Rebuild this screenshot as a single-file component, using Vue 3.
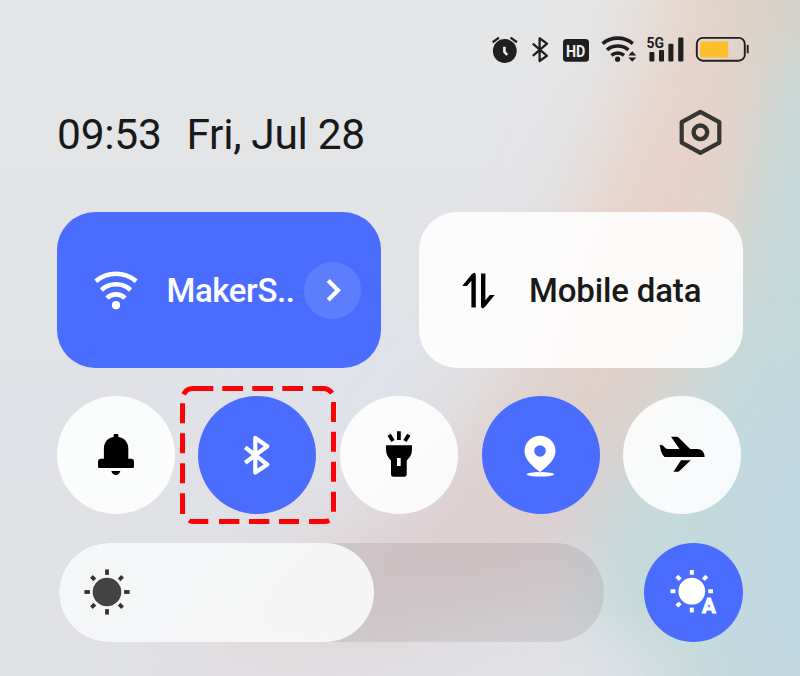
<script setup>
const rays = [0, 45, 90, 135, 180, 225, 270, 315]
const autoRays = rays.filter((a) => a !== 135)
const brightness = 57.8
</script>

<template>
  <main class="panel">
    <svg class="wallpaper" viewBox="0 0 800 676" aria-hidden="true">
      <defs>
        <linearGradient id="base" x1="0" y1="0" x2="0" y2="1">
          <stop offset="0" stop-color="#e5e6e7" />
          <stop offset="0.6" stop-color="#e0e2e7" />
          <stop offset="1" stop-color="#e0e1e5" />
        </linearGradient>
        <linearGradient id="blush" gradientUnits="userSpaceOnUse" x1="0" y1="0" x2="0" y2="676">
          <stop offset="0" stop-color="#e5d4c9" />
          <stop offset="0.3" stop-color="#e9d1c7" />
          <stop offset="0.55" stop-color="#e0d2cb" />
          <stop offset="0.8" stop-color="#ddced1" />
          <stop offset="1" stop-color="#e3dcdf" />
        </linearGradient>
        <filter id="soft" x="-50%" y="-50%" width="200%" height="200%"><feGaussianBlur stdDeviation="32" /></filter>
        <filter id="softer" x="-50%" y="-50%" width="200%" height="200%"><feGaussianBlur stdDeviation="42" /></filter>
      </defs>
      <rect width="800" height="676" fill="url(#base)" />
      <path d="M670-80L900-80L860 300L640 560L420 640L180 700L230 590L400 500L490 390L580 230L645 60Z" fill="url(#blush)" filter="url(#softer)" />
      <path d="M690 20L735 20L690 190L620 290L570 290L630 180Z" fill="#e9d1c7" opacity="0.5" filter="url(#soft)" />
      <ellipse cx="350" cy="370" rx="70" ry="60" fill="#dfe3ec" opacity="0.7" filter="url(#soft)" />
      <path d="M800-60L950-60L950 800L660 800L600 640L590 520L675 400L728 290L755 150Z" fill="#c4dadb" filter="url(#soft)" />
      <ellipse cx="820" cy="560" rx="90" ry="170" fill="#bfd8e4" filter="url(#softer)" />
      <ellipse cx="560" cy="675" rx="130" ry="30" fill="#e0e1e6" filter="url(#soft)" />
      <ellipse cx="780" cy="0" rx="50" ry="60" fill="#d9d0c5" opacity="0.8" filter="url(#soft)" />
    </svg>

    <div class="content">
      <header class="status">
        <svg class="alarm" width="28" height="30" viewBox="491 35 28 30">
          <circle cx="504.8" cy="51" r="11.9" fill="#1f1f1f" />
          <path d="M492.7 42.2L499 37.6M510.6 37.6L516.9 42.2" stroke="#1f1f1f" stroke-width="2.4" fill="none" />
          <path d="M504.4 46.8V51.8L507.2 55" stroke="#eee" stroke-width="2.6" fill="none" />
        </svg>
        <svg class="bt" width="18" height="30" viewBox="531 35 18 30">
          <path d="M532.8 43.6L547 55.8L539.6 61V38.3L547 43.6L532.8 55.8" fill="none" stroke="#1f1f1f" stroke-width="2.3" stroke-linejoin="round" />
        </svg>
        <svg class="hd" width="28" height="30" viewBox="562 35 28 30">
          <rect x="563" y="39" width="26" height="22.7" rx="3.5" fill="#1f1f1f" />
          <text transform="translate(566 56.6) scale(0.84 1)" class="hd-text">HD</text>
        </svg>
        <svg class="net" width="38" height="30" viewBox="600 35 38 30">
          <g fill="none" stroke="#1f1f1f" stroke-width="3.6">
            <path d="M602.6 43.6A23.5 23.5 0 0 1 632.8 43.6" />
            <path d="M607 49.8A17 17 0 0 1 628.4 49.8" />
            <path d="M611.4 55.3A10 10 0 0 1 624 55.3" />
          </g>
          <circle cx="617.6" cy="59.2" r="2.6" fill="#1f1f1f" />
          <path d="M632.3 51.3L636.3 55.4H628.3ZM628.3 57.6H636.3L632.3 61.7Z" fill="#1f1f1f" />
        </svg>
        <svg class="signal" width="40" height="36" viewBox="646 32 40 36">
          <g fill="#1f1f1f">
            <text transform="translate(646.6 48) scale(0.9 1)" class="g-text">5G</text>
            <rect x="649.4" y="52" width="5" height="9.4" rx="1" />
            <rect x="659" y="50" width="5" height="11.4" rx="1" />
            <rect x="668.4" y="43.8" width="5" height="17.6" rx="1" />
            <rect x="678.2" y="37.6" width="5.2" height="23.8" rx="1" />
          </g>
        </svg>
        <svg class="battery" width="54" height="30" viewBox="695 35 54 30">
          <rect x="696.8" y="37.9" width="48" height="22.8" rx="6" fill="none" stroke="#1f1f1f" stroke-width="1.9" />
          <rect x="700" y="41.5" width="28.2" height="15.9" rx="2.5" fill="#fbbf2b" />
          <path d="M747.7 45V53.3" stroke="#1f1f1f" stroke-width="1.9" />
        </svg>
      </header>

      <div class="heading">
        <span class="time">09:53</span>
        <span class="date">Fri, Jul 28</span>
        <svg class="settings" width="46" height="50" viewBox="677 107 46 50">
          <path d="M700.4 111.9L719.3 122.2V142.6L700.4 152.9L681.7 142.6V122.2Z" fill="none" stroke="#353533" stroke-width="4.2" stroke-linejoin="round" />
          <circle cx="700.4" cy="132.3" r="6.8" fill="none" stroke="#353533" stroke-width="4.4" />
        </svg>
      </div>

      <section class="cards">
        <div class="card active">
          <svg class="card-icon" width="52" height="48" viewBox="90 266 52 48">
            <g fill="none" stroke="#fff" stroke-width="4.6">
              <path d="M95.8 281.2A31 31 0 0 1 136.2 281.2" />
              <path d="M101.4 290A21.5 21.5 0 0 1 130.6 290" />
              <path d="M107 298.2A12.6 12.6 0 0 1 125 298.2" />
            </g>
            <circle cx="116" cy="305.2" r="4.1" fill="#fff" />
          </svg>
          <span class="label wifi-name">MakerS..</span>
          <button class="more" aria-label="More">
            <svg width="24" height="28" viewBox="321 276 24 28">
              <path d="M328.2 280.6L338 290.3L328.2 300" fill="none" stroke="#fff" stroke-width="4.2" />
            </svg>
          </button>
        </div>
        <div class="card">
          <svg class="card-icon" width="52" height="48" viewBox="452 266 52 48">
            <path id="arrow" d="M475.8 307.5H471.4V280.8L467 286H462.2L471.7 274.3Q475.8 270.8 475.8 275.4Z" />
            <use href="#arrow" transform="rotate(180 478.4 290.5)" />
          </svg>
          <span class="label">Mobile data</span>
        </div>
      </section>

      <section class="toggles">
        <button class="toggle" aria-label="Sound">
          <svg width="60" height="60" viewBox="86 425 60 60">
            <path d="M113.6 437V435Q113.6 434 114.6 434H117.4Q118.4 434 118.4 435V437C124.3 437.7 128.3 442.5 128.3 448.5V458.7H131Q134 458.7 134 461.7V466.5Q134 468 132.5 468H99.5Q98 468 98 466.5V461.7Q98 458.7 101 458.7H103.9V448.5C103.9 442.5 107.8 437.7 113.6 437Z" />
            <path d="M111.3 471H120.3Q119.2 475 115.8 475Q112.5 475 111.3 471Z" />
          </svg>
        </button>
        <div class="marked">
          <button class="toggle on" aria-label="Bluetooth">
            <svg width="60" height="60" viewBox="228 425 60 60">
              <path d="M246.2 447.3L268.2 464.5L256.3 472.6V437.9L268.2 446.2L246.2 462.8" fill="none" stroke="#fff" stroke-width="4.2" stroke-linejoin="round" />
            </svg>
          </button>
          <svg class="marker" width="156" height="138" viewBox="0 0 156 138">
            <path d="M3.6 8.3Q6.5 2.5 13 2.5H33.3M42.3 2.5H63M72.3 2.5H93M102.3 2.5H123M132.3 2.5H143Q149 2.5 152 7.2M153.5 16V36M153.5 45.7V65.7M153.5 75.7V95.7M153.5 105.7V125.7M149.3 134.5Q147 135.5 144 135.5H129M119 135.5H99M89.3 135.5H69M59.3 135.5H39M28.3 135.5H13Q10.5 135.5 9 134.5M2.5 128V107.3M2.5 97.3V77.3M2.5 67.3V47.3M2.5 37.3V17.3" fill="none" stroke="#fb0207" stroke-width="5" />
          </svg>
        </div>
        <button class="toggle" aria-label="Flashlight">
          <svg width="60" height="60" viewBox="369 425 60 60">
            <path d="M386 445.3H412V449C412 455 409.5 457.5 406.7 460.5V474.2Q406.7 476.7 404.2 476.7H393.5Q391 476.7 391 474.2V460.5C388.5 457.5 386 455 386 449Z" />
            <rect x="397" y="458" width="3.7" height="8" fill="#fff" />
            <path d="M398.9 431.3V440M389.2 434.7L393 441M408.8 434.7L405 441" stroke="#000" stroke-width="3.8" />
          </svg>
        </button>
        <button class="toggle on" aria-label="Location">
          <svg width="60" height="60" viewBox="511 425 60 60">
            <ellipse cx="540.4" cy="474.3" rx="13.7" ry="2.3" fill="#fff" />
            <path d="M540 435.7A15.5 15.5 0 0 1 555.5 451.2C555.5 460 547 466 540 472.3C533 466 524.5 460 524.5 451.2A15.5 15.5 0 0 1 540 435.7Z" fill="#fff" stroke="#4a6dff" stroke-width="0.8" paint-order="stroke" />
            <circle cx="540" cy="451" r="5.8" fill="#4a6dff" />
          </svg>
        </button>
        <button class="toggle" aria-label="Airplane mode">
          <svg width="60" height="60" viewBox="652 425 60 60">
            <path d="M659.7 444.8L663 445.4Q665.5 449 668.6 449H679.5L671 436.7H676.5Q677.8 436.7 678.8 437.7L690.2 449H697C702 449 704.6 452.5 704.6 457H664.5C661.5 454.5 660.5 450 659.7 444.8Z" />
            <path d="M681 460.3H690.7L680 470.5Q678.8 471.7 677.4 471.7H673.5Z" />
          </svg>
        </button>
      </section>

      <section class="bottom">
        <div class="slider">
          <div class="fill" :style="{ width: brightness + '%' }">
            <svg width="50" height="50" viewBox="-25 -25 50 50">
              <circle r="14.3" fill="#434343" />
              <rect v-for="a in rays" :key="a" x="-1.9" :y="a % 90 ? -22 : -22.6" width="3.8" :height="a % 90 ? 4.8 : 5.5" fill="#333" :transform="`rotate(${a})`" />
            </svg>
          </div>
        </div>
        <button class="auto" aria-label="Auto brightness">
          <svg width="60" height="60" viewBox="-30 -30 60 60">
            <g fill="#fff">
              <g transform="translate(-2.2 -0.8)">
                <circle r="13.4" />
                <rect v-for="a in autoRays" :key="a" x="-2" y="-21.2" width="4" height="4.8" :transform="`rotate(${a})`" />
              </g>
              <path class="letter-gap" d="M8 21L14.500 6L21.500 21Z" />
              <text x="8" y="20.8" class="auto-text">A</text>
            </g>
          </svg>
        </button>
      </section>
    </div>
  </main>
</template>

<style>
body {
  margin: 0;
}
</style>

<style scoped>
.panel {
  position: relative;
  width: 800px;
  height: 676px;
  overflow: hidden;
  box-sizing: border-box;
  font-family: Roboto, "Liberation Sans", sans-serif;
  color: #191919;
}
.wallpaper {
  position: absolute;
  inset: 0;
  width: 800px;
  height: 676px;
}
.content {
  position: relative;
  padding: 35px 57px 0;
}
svg {
  display: block;
  flex: none;
}
button {
  border: 0;
  padding: 0;
  margin: 0;
  color: inherit;
}
.status {
  display: flex;
  align-items: center;
  justify-content: flex-end;
  height: 30px;
  margin-right: -6px;
}
.bt {
  margin-left: 12px;
}
.hd {
  margin-left: 13px;
}
.net {
  margin-left: 10px;
}
.signal {
  margin-left: 8px;
}
.battery {
  margin-left: 9px;
}
.hd-text {
  font-size: 17px;
  font-weight: 700;
  fill: #eee;
}
.g-text {
  font-size: 15.5px;
  font-weight: 700;
}
.heading {
  display: flex;
  align-items: center;
  height: 50px;
  margin-top: 42px;
  padding-right: 20px;
  font-size: 42.5px;
  letter-spacing: -0.25px;
  line-height: 50px;
}
.time {
  width: 129.5px;
  padding-top: 5px;
  white-space: nowrap;
}
.date {
  flex: 1;
  padding-top: 5px;
  letter-spacing: -0.35px;
}
.cards {
  display: flex;
  gap: 38px;
  margin-top: 55.4px;
}
.card {
  display: flex;
  align-items: center;
  box-sizing: border-box;
  width: 324px;
  height: 156px;
  padding-left: 33px;
  border-radius: 38px;
  background: rgba(255, 255, 255, 0.88);
}
.card.active {
  background: #4a6dff;
  color: #fff;
}
.label {
  margin-left: 25px;
  font-size: 33px;
  font-weight: 500;
  letter-spacing: -0.15px;
  line-height: 40px;
  white-space: nowrap;
  padding-top: 2px;
}
.wifi-name {
  width: 137.5px;
  margin-left: 24.5px;
  letter-spacing: -0.4px;
}
.more {
  display: grid;
  place-items: center;
  width: 57px;
  height: 57px;
  border-radius: 50%;
  background: #5d7dff;
}
.toggles {
  display: flex;
  gap: 23.5px;
  margin-top: 28px;
}
.toggle {
  display: grid;
  place-items: center;
  width: 118px;
  height: 118px;
  border-radius: 50%;
  background: rgba(255, 255, 255, 0.87);
}
.toggle.on,
.auto {
  background: #4a6dff;
}
.marked {
  position: relative;
  left: -0.1px;
}
.marker {
  position: absolute;
  left: -18.4px;
  top: -10.4px;
}
.bottom {
  display: flex;
  justify-content: space-between;
  margin-top: 28.4px;
  padding-left: 2px;
}
.slider {
  width: 545px;
  height: 99px;
  border-radius: 50px;
  background: rgba(90, 70, 70, 0.12);
  overflow: hidden;
}
.fill {
  display: flex;
  align-items: center;
  box-sizing: border-box;
  height: 99px;
  padding-left: 23px;
  border-radius: 50px;
  background: rgba(251, 252, 252, 0.88);
}
.auto {
  display: grid;
  place-items: center;
  width: 99px;
  height: 99px;
  border-radius: 50%;
}
.letter-gap {
  fill: #4a6dff;
  stroke: #4a6dff;
  stroke-width: 4px;
  stroke-linejoin: round;
}
.auto-text {
  font-family: Roboto, "Liberation Sans", sans-serif;
  font-size: 20.5px;
  font-weight: 700;
  stroke: #fff;
  stroke-width: 0.9px;
}
</style>
